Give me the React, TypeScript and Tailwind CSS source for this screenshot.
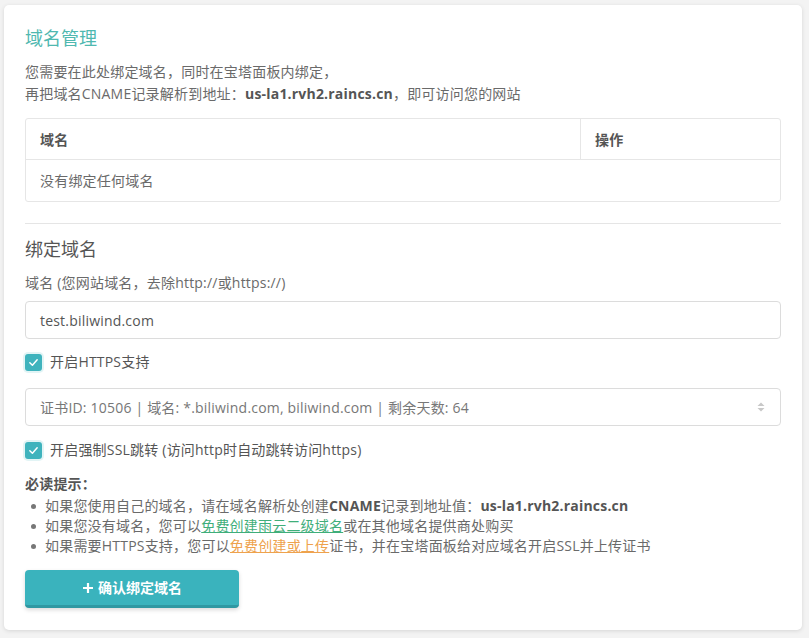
import React from "react";

const font = { fontFamily: '"Open Sans", "Noto Sans CJK SC", sans-serif' };

function Check() {
  return (
    <span className="flex h-[17px] w-[17px] shrink-0 items-center justify-center rounded-[3px] bg-[#3fb3bd] shadow-[0_0_0_2px_rgba(63,179,189,0.15)]">
      <svg width="11" height="11" viewBox="0 0 12 12" fill="none">
        <path d="M2 6.2 L4.8 9 L10 3" stroke="white" strokeWidth="1.6" strokeLinecap="round" strokeLinejoin="round" />
      </svg>
    </span>
  );
}

export default function App() {
  return (
    <div className="min-h-[638px] w-full bg-[#f3f3f3] pl-[4px] pr-[7px] pt-[5px] pb-[8px]" style={font}>
      <div className="flex flex-col rounded-[5px] bg-white px-[21px] pt-[22px] pb-[22px] shadow-[0_1px_4px_rgba(0,0,0,0.12)] text-[14px] tracking-[0.2px] text-[#6a6a6a]">
        <h2 className="text-[18px] leading-[22px] tracking-normal text-[#4fb8b0]">域名管理</h2>
        <div className="mt-[12px] leading-[22px]">
          <p>您需要在此处绑定域名，同时在宝塔面板内绑定，</p>
          <p>
            再把域名CNAME记录解析到地址：<b className="font-bold text-[#555]">us-la1.rvh2.raincs.cn</b>，即可访问您的网站
          </p>
        </div>
        <div className="mt-[13px] rounded-[3px] border border-[#e6e6e6]">
          <div className="flex h-[41px] border-b border-[#e6e6e6] font-bold text-[#555]">
            <div className="flex flex-1 items-center px-[14px]">域名</div>
            <div className="flex w-[200px] items-center border-l border-[#e6e6e6] px-[14px]">操作</div>
          </div>
          <div className="flex h-[41px] items-center px-[14px]">没有绑定任何域名</div>
        </div>
        <div className="mt-[21px] border-t border-[#e5e5e5]" />
        <h3 className="mt-[14px] text-[18px] leading-[22px] tracking-normal text-[#555]">绑定域名</h3>
        <label className="mt-[13px] leading-[20px]">域名 (您网站域名，去除http://或https://)</label>
        <div className="mt-[8px] flex h-[38px] items-center rounded-[4px] border border-[#dcdcdc] px-[14px] text-[14px] text-[#555]">
          test.biliwind.com
        </div>
        <div className="mt-[14px] flex items-center gap-[8px] leading-[18px]">
          <Check />
          <span className="text-[#555]">开启HTTPS支持</span>
        </div>
        <div className="mt-[17px] flex h-[38px] items-center justify-between rounded-[4px] border border-[#dcdcdc] pl-[14px] pr-[14px] text-[#777]">
          <span>证书ID: 10506 | 域名: *.biliwind.com, biliwind.com | 剩余天数: 64</span>
          <svg width="10" height="12" viewBox="0 0 10 12">
            <path d="M5 1.5 L8.5 5 H1.5 Z" fill="#c8c8c8" />
            <path d="M5 10.5 L8.5 7 H1.5 Z" fill="#c8c8c8" />
          </svg>
        </div>
        <div className="mt-[15px] flex items-center gap-[8px] leading-[18px]">
          <Check />
          <span className="text-[#555]">开启强制SSL跳转 (访问http时自动跳转访问https)</span>
        </div>
        <div className="mt-[15px] font-bold leading-[20px] text-[#555]">必读提示：</div>
        <ul className="mt-[2px] leading-[20px]">
          <li className="flex items-center">
            <span className="mx-[6px] h-[5px] w-[5px] shrink-0 rounded-full bg-[#777]" />
            <span className="ml-[3px]">
              如果您使用自己的域名，请在域名解析处创建<b className="text-[#555]">CNAME</b>记录到地址值：<b className="text-[#555]">us-la1.rvh2.raincs.cn</b>
            </span>
          </li>
          <li className="flex items-center">
            <span className="mx-[6px] h-[5px] w-[5px] shrink-0 rounded-full bg-[#777]" />
            <span className="ml-[3px]">
              如果您没有域名，您可以<a className="text-[#3fae7a] underline">免费创建雨云二级域名</a>或在其他域名提供商处购买
            </span>
          </li>
          <li className="flex items-center">
            <span className="mx-[6px] h-[5px] w-[5px] shrink-0 rounded-full bg-[#777]" />
            <span className="ml-[3px]">
              如果需要HTTPS支持，您可以<a className="text-[#eea24d] underline">免费创建或上传</a>证书，并在宝塔面板给对应域名开启SSL并上传证书
            </span>
          </li>
        </ul>
        <button className="mt-[14px] flex h-[38px] w-[214px] items-center justify-center gap-[4px] rounded-[4px] border-b-[3px] border-[#2f98a2] bg-[#3ab3bd] font-bold tracking-normal text-white shadow-[0_2px_4px_rgba(0,0,0,0.15)]">
          <svg width="12" height="12" viewBox="0 0 12 12">
            <path d="M6 1 V11 M1 6 H11" stroke="white" strokeWidth="2.2" />
          </svg>
          <span>确认绑定域名</span>
        </button>
      </div>
    </div>
  );
}
